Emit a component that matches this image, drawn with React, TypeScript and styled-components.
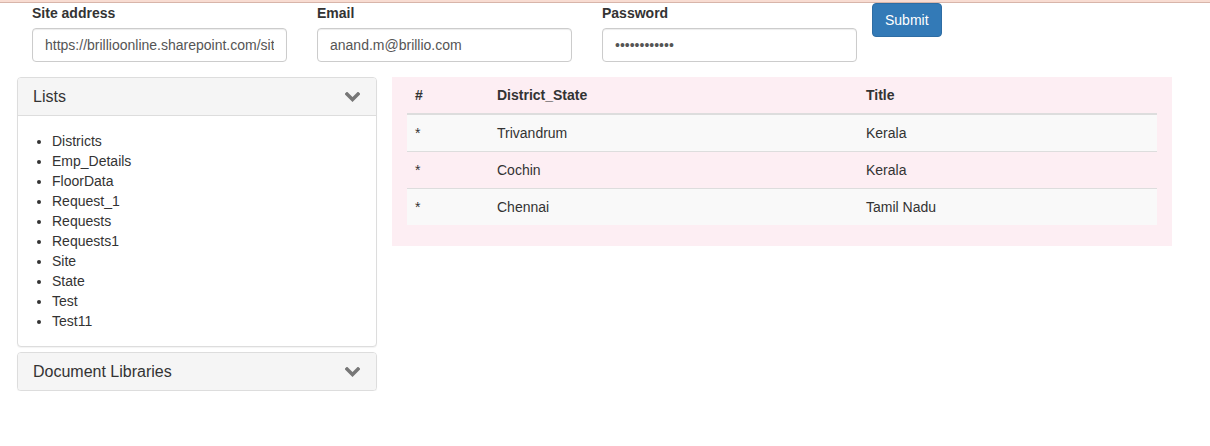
import React from "react";
import styled, { createGlobalStyle } from "styled-components";

const Global = createGlobalStyle`
  html, body { margin: 0; padding: 0; background: #fff; }
  body {
    font-family: "Liberation Sans", Arial, Helvetica, sans-serif;
    font-size: 14px;
    line-height: 20px;
    color: #333;
  }
  * { box-sizing: border-box; }
`;

const TopStrip = styled.div`
  height: 3px;
  background: #f8dcd2;
  border-bottom: 1px solid #d8b5aa;
`;

const FormRow = styled.form`
  display: flex;
  align-items: flex-start;
  padding: 0 0 0 32px;
  gap: 30px;
`;

const Field = styled.div`
  display: flex;
  flex-direction: column;
  width: 255px;
`;

const Label = styled.label`
  font-weight: bold;
  line-height: 20px;
  height: 20px;
  margin: 0 0 5px 0;
`;

const Input = styled.input`
  height: 34px;
  width: 100%;
  padding: 6px 12px;
  font-family: inherit;
  font-size: 14px;
  color: #555;
  background: #fff;
  border: 1px solid #ccc;
  border-radius: 4px;
  box-shadow: inset 0 1px 1px rgba(0, 0, 0, 0.075);
  outline: none;
`;

const SubmitButton = styled.button`
  height: 34px;
  margin-left: -15px;
  padding: 6px 12px;
  font-family: inherit;
  font-size: 14px;
  line-height: 20px;
  color: #fff;
  background: #337ab7;
  border: 1px solid #2e6da4;
  border-radius: 4px;
`;

const Main = styled.div`
  display: flex;
  align-items: flex-start;
  gap: 15px;
  padding: 15px 0 0 17px;
`;

const Sidebar = styled.div`
  width: 360px;
  display: flex;
  flex-direction: column;
  gap: 5px;
`;

const Panel = styled.div`
  border: 1px solid #ddd;
  border-radius: 4px;
  background: #fff;
  box-shadow: 0 1px 1px rgba(0, 0, 0, 0.05);
  overflow: hidden;
`;

const PanelHeading = styled.div<{ $open?: boolean }>`
  height: ${(p) => (p.$open ? 38 : 37)}px;
  display: flex;
  align-items: center;
  justify-content: space-between;
  padding: 0 16px 0 15px;
  background: #f5f5f5;
  border-bottom: ${(p) => (p.$open ? "1px solid #ddd" : "none")};
`;

const PanelTitle = styled.h4`
  margin: 0;
  font-size: 16px;
  font-weight: normal;
  color: #333;
`;

const PanelBody = styled.div`
  padding: 15px;
`;

const List = styled.ul`
  margin: 0;
  padding-left: 19px;
  list-style: disc;
`;

const TableWrap = styled.div`
  width: 780px;
  background: #fdeef3;
  padding: 0 15px 21px;
`;

const Table = styled.table`
  width: 100%;
  border-collapse: collapse;
  border-spacing: 0;
`;

const Th = styled.th<{ $w: number }>`
  width: ${(p) => p.$w}px;
  text-align: left;
  padding: 8px;
  line-height: 20px;
  font-weight: bold;
  border-bottom: 2px solid #ddd;
`;

const Tr = styled.tr<{ $striped: boolean }>`
  background: ${(p) => (p.$striped ? "#f9f9f9" : "transparent")};
`;

const Td = styled.td`
  padding: 8px;
  line-height: 20px;
  border-top: 1px solid #ddd;
`;

const Chevron = () => (
  <svg width="15" height="10" viewBox="0 0 15 10">
    <polyline
      points="2,2 7.5,7.5 13,2"
      fill="none"
      stroke="#777"
      strokeWidth="3.4"
      strokeLinecap="square"
      strokeLinejoin="miter"
    />
  </svg>
);

const lists = [
  "Districts",
  "Emp_Details",
  "FloorData",
  "Request_1",
  "Requests",
  "Requests1",
  "Site",
  "State",
  "Test",
  "Test11",
];

const rows = [
  { d: "Trivandrum", t: "Kerala" },
  { d: "Cochin", t: "Kerala" },
  { d: "Chennai", t: "Tamil Nadu" },
];

export default function App() {
  return (
    <>
      <Global />
      <TopStrip />
      <FormRow onSubmit={(e) => e.preventDefault()}>
        <Field>
          <Label>Site address</Label>
          <Input
            readOnly
            defaultValue="https://brillioonline.sharepoint.com/sites/Training"
          />
        </Field>
        <Field>
          <Label>Email</Label>
          <Input readOnly defaultValue="anand.m@brillio.com" />
        </Field>
        <Field>
          <Label>Password</Label>
          <Input readOnly type="password" defaultValue="abcdefghijkl" />
        </Field>
        <SubmitButton type="submit">Submit</SubmitButton>
      </FormRow>
      <Main>
        <Sidebar>
          <Panel>
            <PanelHeading $open>
              <PanelTitle>Lists</PanelTitle>
              <Chevron />
            </PanelHeading>
            <PanelBody>
              <List>
                {lists.map((l) => (
                  <li key={l}>{l}</li>
                ))}
              </List>
            </PanelBody>
          </Panel>
          <Panel>
            <PanelHeading>
              <PanelTitle>Document Libraries</PanelTitle>
              <Chevron />
            </PanelHeading>
          </Panel>
        </Sidebar>
        <TableWrap>
          <Table>
            <thead>
              <tr>
                <Th $w={82}>#</Th>
                <Th $w={369}>District_State</Th>
                <Th $w={299}>Title</Th>
              </tr>
            </thead>
            <tbody>
              {rows.map((r, i) => (
                <Tr key={r.d} $striped={i % 2 === 0}>
                  <Td>*</Td>
                  <Td>{r.d}</Td>
                  <Td>{r.t}</Td>
                </Tr>
              ))}
            </tbody>
          </Table>
        </TableWrap>
      </Main>
    </>
  );
}
